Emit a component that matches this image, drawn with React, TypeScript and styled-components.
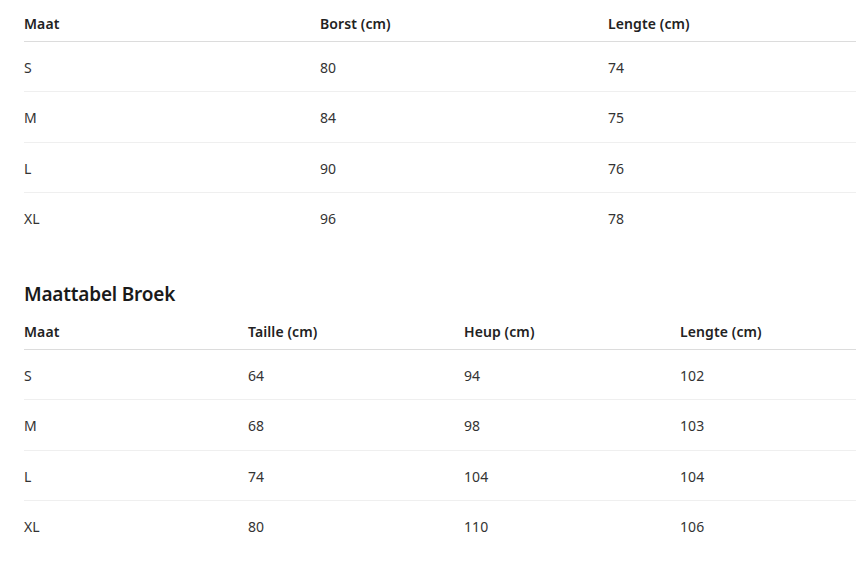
import React from "react";
import styled, { createGlobalStyle } from "styled-components";

const Global = createGlobalStyle`
  html, body { margin: 0; padding: 0; background: #fff; overflow: hidden; }
  body { font-family: "Segoe UI", "Noto Sans", "Open Sans", sans-serif; color: #333; }
`;

const Page = styled.div`
  width: 896px;
  padding: 5px 0 0 24px;
  box-sizing: border-box;
`;

const Table = styled.div`
  width: 872px;
  display: flex;
  flex-direction: column;
`;

const Row = styled.div<{ $cols: string; $head?: boolean }>`
  display: grid;
  grid-template-columns: ${(p) => p.$cols};
  border-bottom: 1px solid ${(p) => (p.$head ? "#dcdcdc" : "#efefef")};
  &:last-child { border-bottom: none; }
`;

const HeadCell = styled.div`
  font-size: 14px;
  font-weight: 600;
  color: #222;
  line-height: 20px;
  padding: 9px 0 7px;
  letter-spacing: 0.1px;
`;

const Cell = styled.div`
  font-size: 14px;
  color: #333;
  line-height: 20px;
  padding: 16px 0 13.3px;
  letter-spacing: 0.1px;
`;

const Heading = styled.h2`
  margin: 38px 0 5px;
  font-size: 19px;
  line-height: 28px;
  font-weight: 600;
  color: #1a1a1a;
  letter-spacing: -0.2px;
`;

type T = { cols: string; head: string[]; rows: string[][] };

const shirt: T = {
  cols: "296px 288px 288px",
  head: ["Maat", "Borst (cm)", "Lengte (cm)"],
  rows: [
    ["S", "80", "74"],
    ["M", "84", "75"],
    ["L", "90", "76"],
    ["XL", "96", "78"],
  ],
};

const pants: T = {
  cols: "224px 216px 216px 216px",
  head: ["Maat", "Taille (cm)", "Heup (cm)", "Lengte (cm)"],
  rows: [
    ["S", "64", "94", "102"],
    ["M", "68", "98", "103"],
    ["L", "74", "104", "104"],
    ["XL", "80", "110", "106"],
  ],
};

function SizeTable({ t }: { t: T }) {
  return (
    <Table>
      <Row $cols={t.cols} $head>
        {t.head.map((h) => (
          <HeadCell key={h}>{h}</HeadCell>
        ))}
      </Row>
      {t.rows.map((r) => (
        <Row key={r[0]} $cols={t.cols}>
          {r.map((c, i) => (
            <Cell key={i}>{c}</Cell>
          ))}
        </Row>
      ))}
    </Table>
  );
}

export default function App() {
  return (
    <Page>
      <Global />
      <SizeTable t={shirt} />
      <Heading>Maattabel Broek</Heading>
      <SizeTable t={pants} />
    </Page>
  );
}
